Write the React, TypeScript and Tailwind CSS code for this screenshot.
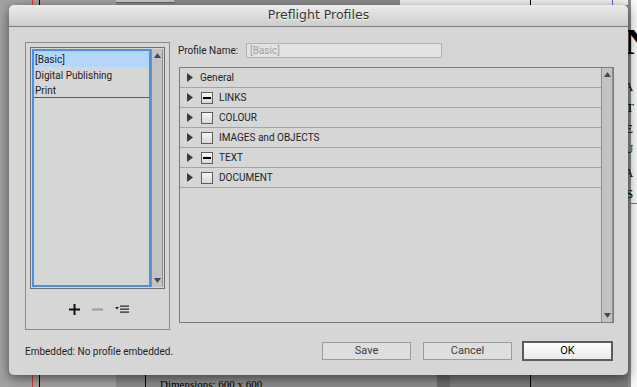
import React from "react";

const ui = "font-['Roboto','Liberation_Sans',sans-serif]";

function Triangle() {
  return (
    <svg width="6" height="9" viewBox="0 0 6 9" className="shrink-0">
      <polygon points="0,0 6,4.5 0,9" fill="#3b3b3b" />
    </svg>
  );
}

function Check({ mixed }: { mixed?: boolean }) {
  return (
    <div className="w-[12px] h-[12px] shrink-0 border border-[#5e5e5e] bg-gradient-to-b from-[#f6f6f6] to-[#d9d9d9] flex items-center justify-center">
      {mixed && <div className="w-[8px] h-[2px] bg-black" />}
    </div>
  );
}

function TreeRow({ label, mixed, plain }: { label: string; mixed?: boolean; plain?: boolean }) {
  return (
    <div className="h-[20px] flex items-center border-b border-[#a4a4a4] pl-[7px]">
      <Triangle />
      {plain ? (
        <span className="ml-[7px] text-[10px] text-[#1e1e1e]">{label}</span>
      ) : (
        <>
          <div className="ml-[8px]">
            <Check mixed={mixed} />
          </div>
          <span className="ml-[6px] text-[10px] text-[#1e1e1e]">{label}</span>
        </>
      )}
    </div>
  );
}

function Scrollbar() {
  return (
    <div className="w-[12px] shrink-0 bg-[#c3c3c3] border-x border-[#8e8e8e] flex flex-col justify-between items-center py-[4px]">
      <svg width="7" height="5" viewBox="0 0 7 5">
        <polygon points="0,5 3.5,0 7,5" fill="#4a4a4a" />
      </svg>
      <svg width="7" height="5" viewBox="0 0 7 5">
        <polygon points="0,0 7,0 3.5,5" fill="#4a4a4a" />
      </svg>
    </div>
  );
}

function Button({ label, primary }: { label: string; primary?: boolean }) {
  return primary ? (
    <div className="w-[91px] h-[20px] border-2 border-[#5b5b5b] bg-gradient-to-b from-[#ffffff] to-[#e9e9e9] flex items-center justify-center text-[11px] text-black">
      {label}
    </div>
  ) : (
    <div className="w-[89px] h-[18px] border border-[#9c9c9c] bg-[#dedede] flex items-center justify-center text-[11px] text-[#3c3c3c]">
      {label}
    </div>
  );
}

export default function App() {
  return (
    <div className={`relative w-[637px] h-[387px] overflow-hidden bg-[#8c8c8c] ${ui}`}>
      {/* backdrop: the document window behind the dialog */}
      <div className="absolute left-0 top-0 w-[116px] h-[387px] bg-[#a3a3a3]" />
      <div className="absolute left-[32px] top-0 w-[1px] h-[387px] bg-[#d23b3b]" />
      <div className="absolute left-[39px] top-0 w-[1px] h-[387px] bg-black" />
      <div className="absolute left-[116px] top-0 w-[58px] h-[3px] bg-[#c9c9c9] border-b border-[#666]" />
      <div className="absolute left-[145px] top-[370px] w-[1px] h-[17px] bg-black" />
      <div className="absolute left-[437px] top-[370px] w-[13px] h-[17px] bg-[#6b6b6b]" />
      <div className="absolute left-[450px] top-[370px] w-[187px] h-[17px] bg-[#7c7c7c]" />
      <div className="absolute left-[400px] top-0 w-[237px] h-[5px] bg-[#f2f2f2]" />
      <div className="absolute left-[530px] top-0 w-[1px] h-[387px] bg-black" />
      <div className="absolute left-[612px] top-0 w-[1px] h-[5px] bg-[#7a5ad6]" />
      <div className="absolute left-[160px] top-[379px] text-[11px] leading-[11px] text-black font-['Liberation_Serif',serif]">
        Dimensions: 600 x 600
      </div>
      <div className="absolute left-[628px] top-0 w-[9px] h-[387px] bg-[#f7f7f7] border-l-[3px] border-[#8a8a8a] font-['Liberation_Serif',serif] text-[13px] text-black leading-none">
        <div className="absolute left-[-6px] top-[24px] text-[36px] font-bold">N</div>
        <div className="absolute left-[-7px] top-[80px]">A</div>
        <div className="absolute left-[-5px] top-[101px]">T</div>
        <div className="absolute left-[-6px] top-[122px]">E</div>
        <div className="absolute left-[-7px] top-[142px]">U</div>
        <div className="absolute left-[-7px] top-[166px]">A</div>
        <div className="absolute left-[-5px] top-[187px]">S</div>
        <div className="absolute left-0 top-[203px] w-[9px] h-[1px] bg-[#9b59c9]" />
      </div>

      {/* dialog window */}
      <div className="absolute left-[9px] top-[5px] w-[619px] h-[370px] rounded-[5px] bg-[#d6d6d6] shadow-[0_3px_12px_rgba(0,0,0,0.55)] flex flex-col overflow-hidden">
        <div className="h-[22px] shrink-0 rounded-t-[5px] border-b border-[#7b7b7b] bg-gradient-to-b from-[#ececec] to-[#cdcdcd] flex items-center justify-center">
          <span className="font-['DejaVu_Sans',sans-serif] text-[12.5px] text-[#363636] [text-shadow:0_1px_0_rgba(255,255,255,0.7)]">
            Preflight Profiles
          </span>
        </div>

        <div className="flex items-start pl-[16px] pt-[15px]">
          {/* profile list group */}
          <div className="w-[145px] h-[288px] border border-[#8a8a8a] flex flex-col pt-[4px] px-[4px]">
            <div className="h-[242px] border border-[#707070] p-[1px] flex">
              <div className="flex-1 border-2 border-[#4a90e2] flex flex-col text-[10px] text-[#1c1c1c]">
                <div className="h-[16px] flex items-center pl-[1px] bg-[#b5d6fb]">[Basic]</div>
                <div className="h-[16px] flex items-center pl-[1px]">Digital Publishing</div>
                <div className="h-[15px] flex items-center pl-[1px] border-b border-[#5c5c5c]">Print</div>
              </div>
              <Scrollbar />
            </div>
            <div className="flex-1 flex items-center justify-center gap-[12px] pl-[2px]">
              <svg width="11" height="11" viewBox="0 0 11 11">
                <rect x="0" y="4.5" width="11" height="2" fill="#111" />
                <rect x="4.5" y="0" width="2" height="11" fill="#111" />
              </svg>
              <svg width="11" height="11" viewBox="0 0 11 11">
                <rect x="0" y="4.5" width="11" height="2" fill="#9a9a9a" />
              </svg>
              <svg width="14" height="9" viewBox="0 0 14 9">
                <polygon points="0,2 4,2 2,4.5" fill="#222" />
                <rect x="5" y="0.5" width="9" height="1.2" fill="#222" />
                <rect x="5" y="3.5" width="9" height="1.2" fill="#222" />
                <rect x="5" y="6.5" width="9" height="1.2" fill="#222" />
              </svg>
            </div>
          </div>

          {/* profile settings */}
          <div className="ml-[8px] pt-[1px] flex flex-col">
            <div className="flex items-center h-[15px]">
              <span className="text-[10px] text-[#1e1e1e] w-[68px]">Profile Name:</span>
              <div className="w-[196px] h-[15px] border border-[#b2b2b2] bg-[#e3e3e3] flex items-center pl-[3px] text-[10px] text-[#a0a0a0]">
                [Basic]
              </div>
            </div>
            <div className="mt-[9px] ml-[1px] w-[435px] h-[256px] border border-[#7c7c7c] flex">
              <div className="flex-1 flex flex-col">
                <TreeRow label="General" plain />
                <TreeRow label="LINKS" mixed />
                <TreeRow label="COLOUR" />
                <TreeRow label="IMAGES and OBJECTS" />
                <TreeRow label="TEXT" mixed />
                <TreeRow label="DOCUMENT" />
              </div>
              <Scrollbar />
            </div>
          </div>
        </div>

        <div className="mt-[11px] flex items-center pl-[16px] pr-[15px] h-[20px]">
          <span className="text-[10px] text-[#1e1e1e]">Embedded: No profile embedded.</span>
          <div className="ml-auto flex items-center">
            <Button label="Save" />
            <div className="ml-[12px]">
              <Button label="Cancel" />
            </div>
            <div className="ml-[10px]">
              <Button label="OK" primary />
            </div>
          </div>
        </div>
      </div>
    </div>
  );
}
